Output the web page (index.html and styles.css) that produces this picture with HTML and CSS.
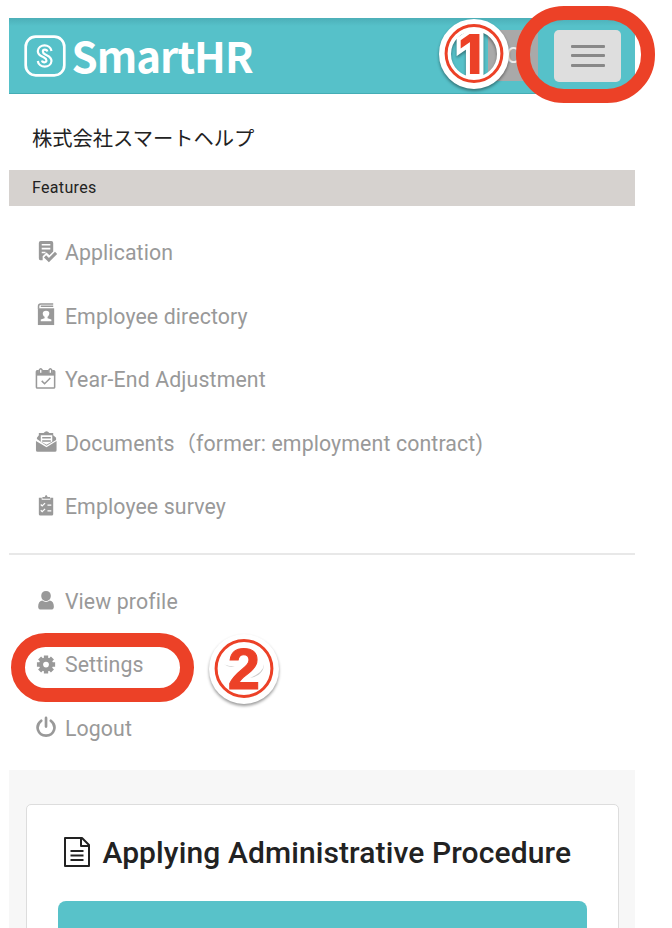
FILE: index.html
```html
<!DOCTYPE html>
<html lang="en">
<head>
<meta charset="utf-8">
<title>SmartHR</title>
<link rel="stylesheet" href="styles.css">
</head>
<body>
<div class="screen">
  <header class="header">
    <svg class="logo-mark" viewBox="0 0 42 42"><rect x="1.7" y="1.7" width="38.6" height="38.6" rx="10"/><path class="logo-s" d="M27.500 16C26.500 8.500 14.500 8.500 13.800 16C13.800 20.500 17.500 21.200 20 22.500C23.500 24.300 22.800 27.300 20.500 27.300C18.800 27.300 18.200 26.500 18 25.500M13.800 26C14.800 33.500 26.800 33.500 27.500 26C27.500 21.500 23.800 20.800 21.300 19.500C17.800 17.700 18.500 14.700 20.800 14.700C22.500 14.700 23.100 15.500 23.300 16.500"/></svg>
    <span class="logo-text">SmartHR</span>
    <div class="account">O</div>
    <button class="menu-button" aria-label="Menu"><i></i><i></i><i></i></button>
    <div class="ring ring-menu"></div>
    <svg class="badge badge-one" viewBox="0 0 76 80">
      <circle class="badge-edge" cx="38" cy="38" r="29"/>
      <circle class="badge-ring" cx="38" cy="37.500" r="27.900"/>
      <text class="badge-number" x="34.500" y="57.500" text-anchor="middle">1</text>
    </svg>
  </header>
  <div class="company">株式会社スマートヘルプ</div>
  <div class="section-title">Features</div>
  <nav class="menu features">
    <a class="item"><svg class="icon" viewBox="0 0 24 24"><path d="M6 1h11q2 0 2 2v9l-4 4-3-3-4 4v4H5.500Q4 21 4 19V3q0-2 2-2z"/><path class="cut" d="M7 5h9M7 9h9M7 13h4"/><path class="line thick" d="M10.500 17l4 4 7.500-7.500"/></svg><span class="label">Application</span></a>
    <a class="item"><svg class="icon" viewBox="0 0 24 24"><path d="M3 5.500h17V23H3z"/><path class="line" d="M19 1H6Q3.700 1 3.700 3.500V6M6 3.500h13"/><path class="white" d="M11.500 8c5 0 3.700 5 1.600 6.400v1.500l4 1.300V19H6v-1.800l4-1.300v-1.500C7.500 13 7 8 11.500 8z"/></svg><span class="label">Employee directory</span></a>
    <a class="item"><svg class="icon" viewBox="0 0 24 24"><rect class="line" x="1.500" y="4" width="19" height="18" rx="1"/><path d="M1 4h20v5H1z"/><path class="cut pin" d="M6 2v4M16 2v4"/><path class="line" d="M4.500 7V3.300q1.500-3 3 0V7M14.500 7V3.300q1.500-3 3 0V7M7 14.500l3 3 6-6"/></svg><span class="label">Year-End Adjustment</span></a>
    <a class="item"><svg class="icon" viewBox="0 0 24 24"><path d="M1 11.500l11 6.500 10.500-6.500V21q0 1.700-1.700 1.700H2.700Q1 22.700 1 21z"/><path d="M2 9.500V8l2-2.500V3h5q3-3.500 6 0h4v2.500L22 8v2.500l-10 6z"/><path class="white" d="M6 5.500h12v6.500l-6 3.500L6 12z"/><path class="line" d="M7.500 8h9M7.500 11.500h9"/></svg><span class="label">Documents（former: employment contract)</span></a>
    <a class="item"><svg class="icon" viewBox="0 0 24 24"><path d="M4 4h3v2h9V4h3v17q0 1.500-1.500 1.500h-12Q4 22.500 4 21z"/><path d="M7.700 5V3h2.500q1.300-4 3 0h2.500v2z"/><path class="cut slim" d="M6 11l1.500 1.500 3-3M6 17l1.500 1.500 3-3M13 11.500h4M13 17.500h4"/></svg><span class="label">Employee survey</span></a>
  </nav>
  <nav class="menu personal">
    <a class="item"><svg class="icon" viewBox="0 0 24 24"><path d="M11.500 2c3 0 5 2 5 5s-1.800 5.500-5 5.500-5-2.500-5-5.500 2-5 5-5z"/><path d="M7.500 12c2.500 2 5.500 2 8 0 3 .500 4.200 3 4.200 6.500 0 2-1.200 3-3 3H6.500c-2 0-3.200-1-3.200-3 0-3.500 1.200-6 4.200-6.500z"/></svg><span class="label">View profile</span></a>
    <a class="item"><svg class="icon" viewBox="0 0 24 24"><path class="gear" d="M11.500 2.500v19M2 12h19M4.800 5.300l13.400 13.400M18.200 5.300L4.800 18.700"/><circle cx="11.500" cy="12" r="7.300"/><circle class="white" cx="11.500" cy="12" r="3"/></svg><span class="label">Settings</span><span class="ring ring-settings"></span>
      <svg class="badge badge-two" viewBox="0 0 76 80">
        <circle class="badge-disc" cx="38" cy="38" r="35"/>
        <circle class="badge-ring" cx="38" cy="37.500" r="27.900"/>
        <path class="shade" d="M18 33q4 4 11 2.500q-8-.500-11-2.500zM58 33q0 8-14 14q14-3 14-14z"/>
        <text class="badge-number" x="38" y="57.500" text-anchor="middle">2</text>
      </svg>
    </a>
    <a class="item"><svg class="icon" viewBox="0 0 24 24"><path class="line power" d="M6.500 5C-.500 10.500 3 20.500 11.500 20.500S23.500 10.500 16.500 5M11.500 2v9"/></svg><span class="label">Logout</span></a>
  </nav>
  <main class="content">
    <section class="card">
      <h1 class="heading"><svg class="file-icon" viewBox="0 0 28 32"><path d="M2 2h17l7 7v21H2zM18 2v8h8M7.500 15h13M7.500 19.500h13M7.500 24h13"/></svg><span>Applying Administrative Procedure</span></h1>
      <div class="action"></div>
    </section>
  </main>
</div>
</body>
</html>
```
FILE: styles.css
```css
* { box-sizing: border-box; }
body { margin: 0; height: 928px; overflow: hidden; background: #fff; color: #222; font-family: Roboto, "Noto Sans CJK JP", sans-serif; }
.screen { width: 625.4px; height: 928px; margin-left: 9.4px; padding-top: 18px; display: flex; flex-direction: column; }
.header { position: relative; height: 76px; flex: none; display: flex; align-items: center; padding: 0 13.7px 0 14.7px; background: linear-gradient(#4cafb8, #56c1c9 8px); border-bottom: 1px solid #44adb5; }
.logo-mark { width: 42px; height: 42px; fill: none; stroke: #fff; stroke-width: 2.7px; }
.logo-s { stroke-width: 2.2px; }
.logo-text { margin: -2px 0 0 5.5px; color: #fff; font: 700 42px/50px "Noto Sans CJK JP", sans-serif; letter-spacing: -1px; white-space: nowrap; }
.account { width: 50px; height: 51px; margin-left: auto; padding-left: 18px; background: #a9a9a9; color: #eee; font: 22px/51px Roboto, sans-serif; }
.menu-button { width: 67px; height: 52px; margin-left: 16px; padding: 0; border: 0; border-radius: 5px; background: #dedede; display: flex; flex-direction: column; align-items: center; justify-content: center; gap: 6.5px; }
.menu-button i { width: 34px; height: 3px; border-radius: 1px; background: #888; }
.ring { position: absolute; border: 14px solid #ec4127; }
.ring-menu { left: 506.3px; top: -12.5px; width: 139.3px; height: 97px; border-radius: 48px; }
.badge { position: absolute; width: 76px; height: 80px; filter: drop-shadow(0 2px 1.5px rgba(0,0,0,.4)); }
.badge-one { left: 427px; top: -2px; }
.badge-edge { fill: none; stroke: #fff; stroke-width: 12px; }
.badge-disc { fill: #fff; }
.badge-ring { fill: none; stroke: #ec4127; stroke-width: 3px; }
.badge-number { fill: #ec4127; stroke: #fff; stroke-width: 8px; paint-order: stroke; font: 800 55px Inter, sans-serif; }
.badge-two .badge-number { stroke: #ec4127; stroke-width: 1px; font: 700 58px "Liberation Sans", sans-serif; }
.shade { fill: #ccc; }
.company { height: 76px; flex: none; padding-left: 22.5px; font: 20.3px/87px "Noto Sans CJK JP", sans-serif; }
.section-title { height: 36px; flex: none; padding-left: 22.5px; background: #d6d2cf; font-size: 16px; line-height: 35px; letter-spacing: .35px; }
.menu { flex: none; display: flex; flex-direction: column; color: #999; }
.features { height: 349px; padding-top: 15.4px; border-bottom: 2px solid #e8e8e8; }
.personal { height: 215px; padding-top: 15px; }
.item { position: relative; height: 63.5px; flex: none; display: flex; align-items: center; padding-left: 25.3px; }
.icon { width: 23px; height: 23px; margin-right: 7.2px; position: relative; top: -2px; fill: #999; stroke: none; }
.personal .icon { top: -1px; }
.icon .white { fill: #fff; }
.icon .cut { fill: none; stroke: #fff; stroke-width: 1.6px; }
.icon .pin { stroke-width: 4px; }
.icon .slim { stroke-width: 1.3px; }
.icon .line { fill: none; stroke: #999; stroke-width: 1.6px; }
.icon .thick { stroke-width: 3.2px; }
.icon .gear { stroke: #999; stroke-width: 4.5px; }
.icon .power { stroke-width: 2.8px; stroke-linecap: round; }
.label { font-size: 21.3px; line-height: 28px; letter-spacing: .12px; white-space: nowrap; }
.ring-settings { left: 2px; top: -.2px; width: 183px; height: 68.5px; border-radius: 35px; }
.badge-two { left: 197px; top: -2.3px; }
.content { height: 158px; background: #f7f7f7; padding: 34px 15.8px 0 16.5px; overflow: hidden; }
.card { height: 160px; padding: 0 31px; background: #fff; border: 1.5px solid #ddd; border-radius: 5px; }
.heading { height: 96px; margin: 0; padding: 0 0 2px 5px; display: flex; align-items: center; font-size: 30px; font-weight: 500; letter-spacing: .11px; white-space: nowrap; }
.file-icon { width: 28px; height: 32px; margin-right: 11.5px; flex: none; fill: none; stroke: #222; stroke-width: 2px; stroke-linejoin: round; }
.action { height: 60px; border-radius: 8px; background: #58c2c9; }
```
